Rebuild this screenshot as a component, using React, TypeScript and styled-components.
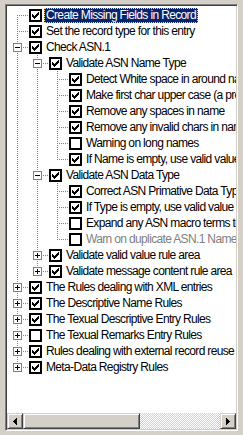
import React from 'react';
import styled, { createGlobalStyle } from 'styled-components';

const GlobalStyle = createGlobalStyle`
  html, body { margin: 0; padding: 0; background: #D4D0C8; }
  body { width: 243px; height: 435px; overflow: hidden; }
`;

const Frame = styled.div`
  box-sizing: border-box;
  margin: 4px 5px;
  width: 233px;
  height: 427px;
  display: flex;
  flex-direction: column;
  border: 1px solid;
  border-color: #808080 #ffffff #ffffff #808080;
  box-shadow: inset 1px 1px #404040, inset -1px -1px #D4D0C8;
  padding: 1px;
  background: #ffffff;
`;

const TreeArea = styled.div`
  flex: 1;
  overflow: hidden;
  padding-top: 1px;
  font-family: "Liberation Sans", Arial, sans-serif;
  font-size: 12px;
  letter-spacing: -0.65px;
  color: #000;
`;

const Row = styled.div`
  display: flex;
  align-items: flex-start;
  height: 16px;
  white-space: nowrap;
`;

const Cell = styled.svg<{ $w: number }>`
  flex: 0 0 auto;
  width: ${p => p.$w}px;
  height: 16px;
  display: block;
  shape-rendering: crispEdges;
`;

const Box = styled.span`
  flex: 0 0 auto;
  box-sizing: border-box;
  width: 13px;
  height: 13px;
  margin-top: 2px;
  border: 2px solid #000;
  background: #fff;
  display: flex;
  align-items: center;
  justify-content: center;
`;

const Label = styled.span<{ $sel?: boolean; $dis?: boolean }>`
  flex: 0 0 auto;
  box-sizing: border-box;
  height: 15px;
  margin-top: 1px;
  margin-left: 2px;
  padding: 0 1px;
  line-height: 13px;
  border: 1px ${p => (p.$sel ? 'dotted #F5DB95' : 'solid transparent')};
  background: ${p => (p.$sel ? '#0A246A' : 'transparent')};
  color: ${p => (p.$sel ? '#ffffff' : p.$dis ? '#808080' : '#000000')};
`;

const ScrollBar = styled.div`
  flex: 0 0 16px;
  display: flex;
  height: 16px;
`;

const SBtn = styled.div`
  box-sizing: border-box;
  flex: 0 0 16px;
  height: 16px;
  background: #D4D0C8;
  border: 1px solid;
  border-color: #D4D0C8 #404040 #404040 #D4D0C8;
  box-shadow: inset 1px 1px #ffffff, inset -1px -1px #808080;
  display: flex;
  align-items: center;
  justify-content: center;
`;

const Thumb = styled(SBtn)<{ $w: number }>`
  flex: 0 0 ${p => p.$w}px;
`;

const Track = styled.div`
  flex: 1;
  background-color: #D4D0C8;
  background-image: conic-gradient(#ffffff 25%, #D4D0C8 0 50%, #ffffff 0 75%, #D4D0C8 0);
  background-size: 2px 2px;
`;

type Node = {
  label: string;
  checked: boolean;
  disabled?: boolean;
  selected?: boolean;
  open?: boolean;
  hasKids?: boolean;
  children?: Node[];
};

const tree: Node[] = [
  { label: 'Create Missing Fields in Record', checked: true, selected: true },
  { label: 'Set the record type for this entry', checked: true },
  {
    label: 'Check ASN.1', checked: true, open: true, hasKids: true, children: [
      {
        label: 'Validate ASN Name Type', checked: true, open: true, hasKids: true, children: [
          { label: 'Detect White space in around names', checked: true },
          { label: 'Make first char upper case (a preferred style)', checked: true },
          { label: 'Remove any spaces in name', checked: true },
          { label: 'Remove any invalid chars in name', checked: true },
          { label: 'Warning on long names', checked: false },
          { label: 'If Name is empty, use valid value', checked: true },
        ],
      },
      {
        label: 'Validate ASN Data Type', checked: true, open: true, hasKids: true, children: [
          { label: 'Correct ASN Primative Data Type', checked: true },
          { label: 'If Type is empty, use valid value', checked: true },
          { label: 'Expand any ASN macro terms to definitions', checked: false },
          { label: 'Warn on duplicate ASN.1 Names', checked: false, disabled: true },
        ],
      },
      { label: 'Validate valid value rule area', checked: true, hasKids: true },
      { label: 'Validate message content rule area', checked: true, hasKids: true },
    ],
  },
  { label: 'The Rules dealing with XML entries', checked: true, hasKids: true },
  { label: 'The Descriptive Name Rules', checked: true, hasKids: true },
  { label: 'The Texual Descriptive Entry Rules', checked: true, hasKids: true },
  { label: 'The Texual Remarks Entry Rules', checked: false, hasKids: true },
  { label: 'Rules dealing with external record reuse', checked: true, hasKids: true },
  { label: 'Meta-Data Registry Rules', checked: true, hasKids: true },
];

type Flat = { node: Node; guides: boolean[]; top: boolean; bottom: boolean };

function flatten(nodes: Node[], guides: boolean[], out: Flat[], root: boolean) {
  nodes.forEach((n, i) => {
    const hasNext = i < nodes.length - 1;
    out.push({ node: n, guides, top: !(root && i === 0), bottom: hasNext });
    if (n.open && n.children) flatten(n.children, [...guides, hasNext], out, false);
  });
  return out;
}

const DOT = '#808080';

function vDots(from: number, to: number, x: number) {
  const r: React.ReactElement[] = [];
  for (let y = from; y < to; y++) if (y % 2 === 0) r.push(<rect key={`v${x}-${y}`} x={x} y={y} width={1} height={1} fill={DOT} />);
  return r;
}
function hDots(from: number, to: number, y: number) {
  const r: React.ReactElement[] = [];
  for (let x = from; x < to; x++) if (x % 2 === 0) r.push(<rect key={`h${x}-${y}`} x={x} y={y} width={1} height={1} fill={DOT} />);
  return r;
}

const Guide = ({ line }: { line: boolean }) => (
  <Cell $w={20} viewBox="0 0 20 16">{line && vDots(0, 16, 10)}</Cell>
);

const Connector = ({ top, bottom, kids, open }: { top: boolean; bottom: boolean; kids?: boolean; open?: boolean }) => (
  <Cell $w={22} viewBox="0 0 22 16">
    {top && vDots(0, 8, 10)}
    {bottom && vDots(8, 16, 10)}
    {!top && !bottom && vDots(8, 9, 10)}
    {hDots(10, 22, 8)}
    {kids && (
      <g>
        <rect x={6} y={4} width={9} height={9} fill={DOT} />
        <rect x={7} y={5} width={7} height={7} fill="#ffffff" />
        <rect x={8} y={8} width={5} height={1} fill="#000" />
        {!open && <rect x={10} y={6} width={1} height={5} fill="#000" />}
      </g>
    )}
  </Cell>
);

const CHECK: [number, number][] = [
  [6, 0], [5, 1], [6, 1], [0, 2], [4, 2], [5, 2], [6, 2],
  [0, 3], [1, 3], [3, 3], [4, 3], [5, 3], [0, 4], [1, 4], [2, 4], [3, 4], [4, 4],
  [1, 5], [2, 5], [3, 5], [2, 6],
];

const CheckMark = () => (
  <svg width="7" height="7" viewBox="0 0 7 7" shapeRendering="crispEdges" style={{ display: 'block' }}>
    {CHECK.map(([x, y]) => <rect key={`${x}-${y}`} x={x} y={y} width={1} height={1} fill="#000" />)}
  </svg>
);

const Arrow = ({ dir }: { dir: 'left' | 'right' }) => (
  <svg width="4" height="7" viewBox="0 0 4 7" shapeRendering="crispEdges" style={{ display: 'block' }}>
    {dir === 'left'
      ? <path d="M0 3h1v-1h1v-1h1v-1h1v7h-1v-1h-1v-1h-1v-1h-1z" fill="#000" />
      : <path d="M0 0h1v1h1v1h1v1h1v1h-1v1h-1v1h-1v1h-1z" fill="#000" />}
  </svg>
);

export default function App() {
  const rows = flatten(tree, [], [], true);
  return (
    <>
      <GlobalStyle />
      <Frame>
        <TreeArea>
          {rows.map((r, i) => (
            <Row key={i}>
              {r.guides.map((g, j) => <Guide key={j} line={g} />)}
              <Connector top={r.top} bottom={r.bottom} kids={r.node.hasKids} open={r.node.open} />
              <Box>{r.node.checked && <CheckMark />}</Box>
              <Label $sel={r.node.selected} $dis={r.node.disabled}>{r.node.label}</Label>
            </Row>
          ))}
        </TreeArea>
        <ScrollBar>
          <SBtn><Arrow dir="left" /></SBtn>
          <Thumb $w={117} />
          <Track />
          <SBtn><Arrow dir="right" /></SBtn>
        </ScrollBar>
      </Frame>
    </>
  );
}
